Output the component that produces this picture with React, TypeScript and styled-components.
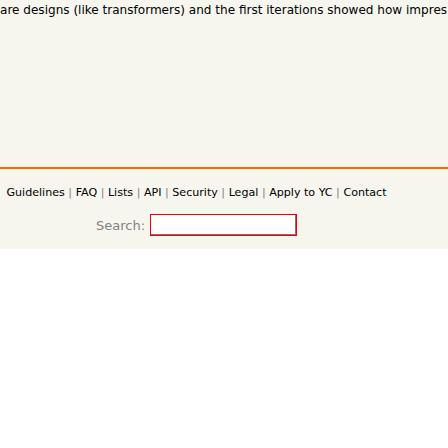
import React from "react";
import styled, { createGlobalStyle } from "styled-components";

const Global = createGlobalStyle`
  html, body { margin: 0; padding: 0; background: #ffffff; }
  body { font-family: Verdana, "DejaVu Sans", sans-serif; }
`;

const Page = styled.div`
  background: #f6f6ef;
  width: 448px;
  overflow: hidden;
`;

const CommentLine = styled.div`
  height: 167px;
  padding-top: 3px;
  box-sizing: border-box;
  font-size: 12.05px;
  line-height: 15px;
  color: #000000;
  white-space: nowrap;
  overflow: hidden;
`;

const Footer = styled.div`
  border-top: 2px solid #ff6600;
  padding: 17px 55px 13px 0;
  display: flex;
  flex-direction: column;
  align-items: center;
`;

const Links = styled.div`
  font-size: 11.1px;
  line-height: 14px;
  color: #828282;
  white-space: nowrap;
`;

const Link = styled.a`
  color: #000000;
  text-decoration: none;
`;

const SearchForm = styled.form`
  margin: 14px 0 0 0;
  display: flex;
  align-items: center;
  gap: 5px;
  font-size: 13px;
  color: #828282;
`;

const SearchInput = styled.input`
  width: 147px;
  height: 22px;
  box-sizing: border-box;
  border: 1px solid #ee0000;
  box-shadow: inset -1px -1px 0 #767676;
  background: #ffffff;
  padding: 0 2px;
  margin: 0;
  outline: none;
  font-family: inherit;
`;

const items = ["Guidelines", "FAQ", "Lists", "API", "Security", "Legal", "Apply to YC", "Contact"];

export default function App() {
  return (
    <>
      <Global />
      <Page>
        <CommentLine>
          are designs (like transformers) and the first iterations showed how impres
        </CommentLine>
        <Footer>
          <Links>
            {items.map((it, i) => (
              <React.Fragment key={it}>
                {i > 0 && " | "}
                <Link href="#">{it}</Link>
              </React.Fragment>
            ))}
          </Links>
          <SearchForm onSubmit={(e) => e.preventDefault()}>
            <span>Search:</span>
            <SearchInput type="text" />
          </SearchForm>
        </Footer>
      </Page>
    </>
  );
}
